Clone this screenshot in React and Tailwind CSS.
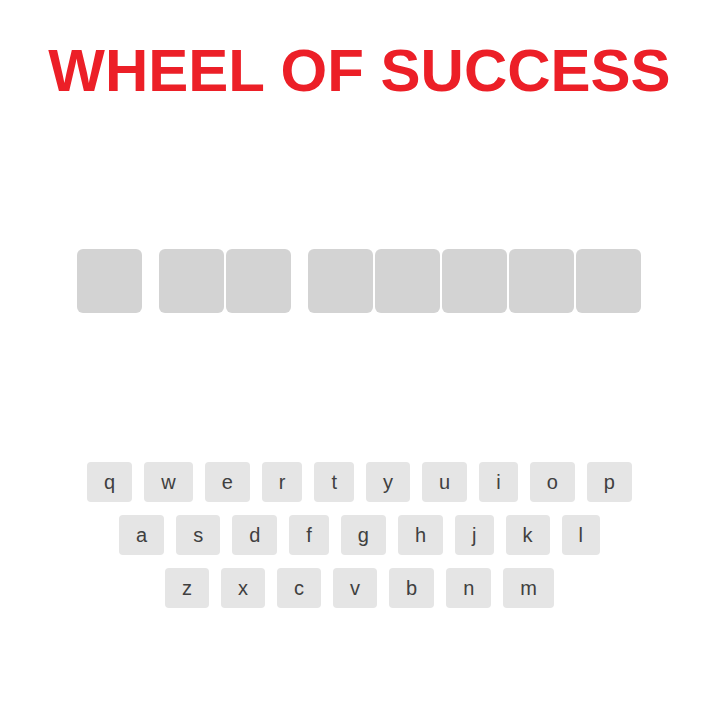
import React from 'react';

const words = [1, 2, 5];

const rows = [
  ['q', 'w', 'e', 'r', 't', 'y', 'u', 'i', 'o', 'p'],
  ['a', 's', 'd', 'f', 'g', 'h', 'j', 'k', 'l'],
  ['z', 'x', 'c', 'v', 'b', 'n', 'm'],
];

const App = () => {
  return (
    <div className="min-h-screen bg-white pt-[41px] pr-[4px] font-['Liberation_Sans',Arial,sans-serif]">
      {/* Title */}
      <h1 className="text-center text-[60px] leading-none font-bold text-[#ec1f27]">
        WHEEL OF SUCCESS
      </h1>

      {/* Hidden phrase */}
      <div className="mt-[148px] pr-[2px] flex justify-center gap-[17px]">
        {words.map((len, w) => (
          <div key={w} className="flex gap-[2px]">
            {Array.from({ length: len }).map((_, i) => (
              <div key={i} className="w-[65px] h-16 rounded-md bg-[#d3d3d3]" />
            ))}
          </div>
        ))}
      </div>

      {/* Keyboard */}
      <div className="mt-[149px] flex flex-col items-center gap-[13px]">
        {rows.map((row, r) => (
          <div key={r} className="flex gap-3">
            {row.map((k) => (
              <button
                key={k}
                className="h-10 px-[17px] rounded bg-[#e5e5e5] text-[20px] text-[#404040] leading-none"
              >
                {k}
              </button>
            ))}
          </div>
        ))}
      </div>
    </div>
  );
};

export default App;
